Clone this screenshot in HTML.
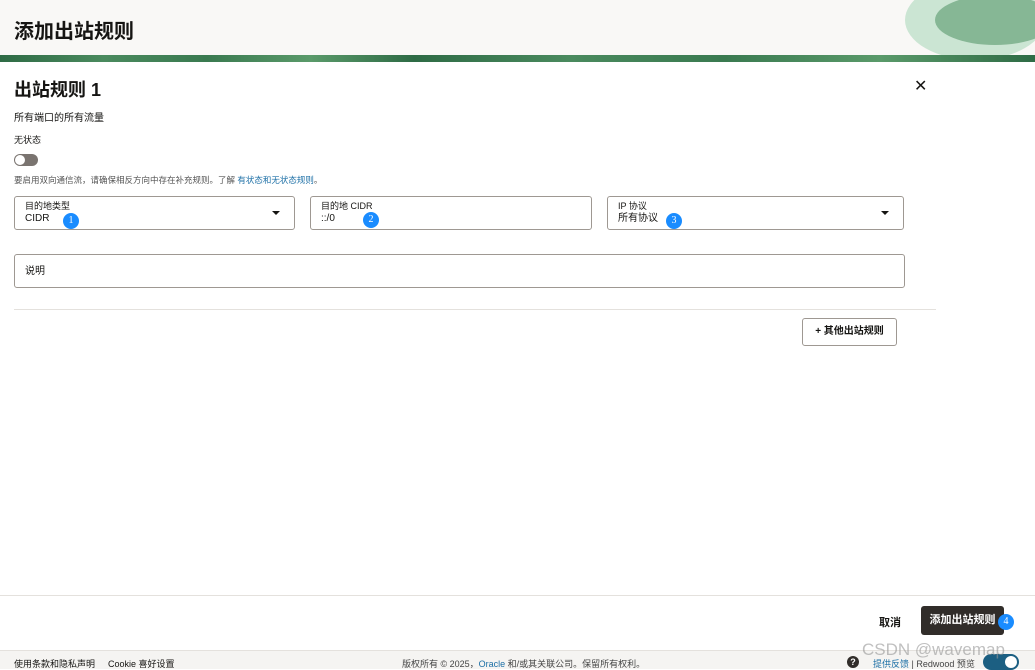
<!DOCTYPE html>
<html><head><meta charset="utf-8"><style>
*{box-sizing:border-box;margin:0;padding:0}
body{width:1035px;height:669px;overflow:hidden;background:#fff;font-family:"Liberation Sans","Noto Sans CJK SC",sans-serif;color:#161513;position:relative}
.hdr{position:absolute;left:0;top:0;width:1035px;height:55px;background:#f9f8f6}
.band{position:absolute;left:0;top:55px;width:1035px;height:7px;background:linear-gradient(90deg,#2e6b45 0,#4a8a5e 10%,#3a7a50 20%,#5a9a6a 30%,#2e6b45 40%,#4a8a5e 55%,#3a7a50 70%,#5a9a6a 85%,#2e6b45 100%)}
.a{position:absolute;white-space:nowrap}
.fld{position:absolute;border:1px solid #9e9892;border-radius:3px;background:#fff}
.lab{position:absolute;font-size:9px;left:10px;top:3px;line-height:12px}
.val{position:absolute;font-size:10px;left:10px;top:15px;line-height:13px}
.car{position:absolute;right:14px;top:14px;width:0;height:0;border-left:4px solid transparent;border-right:4px solid transparent;border-top:4px solid #161513}
.badge{position:absolute;width:16px;height:16px;border-radius:50%;background:#1a8cff;color:#fff;font-size:10px;text-align:center;line-height:16px;font-family:"Liberation Serif",serif}
</style></head><body>
<div class="hdr"></div>
<svg class="a" style="left:880px;top:0" width="155" height="55"><ellipse cx="95" cy="20" rx="70" ry="40" fill="#cbe5d3"/><ellipse cx="115" cy="20" rx="60" ry="25" fill="#86b795"/></svg>
<div class="band"></div>
<div class="a" style="left:14px;top:15px;font-size:20px;font-weight:bold">添加出站规则</div>
<div class="a" style="left:14px;top:76px;font-size:18px;font-weight:bold">出站规则 1</div>
<div class="a" style="left:914px;top:76px;font-size:16px">✕</div>
<div class="a" style="left:14px;top:109px;font-size:10px">所有端口的所有流量</div>
<div class="a" style="left:14px;top:133px;font-size:9px">无状态</div>
<div class="a" style="left:14px;top:154px;width:24px;height:12px;border-radius:6px;background:#7a7470"><div style="position:absolute;left:1px;top:1px;width:10px;height:10px;border-radius:50%;background:#fff"></div></div>
<div class="a" style="left:14px;top:174px;font-size:8.5px;color:#555">要启用双向通信流，请确保相反方向中存在补充规则。了解 <span style="color:#1c6fa6">有状态和无状态规则</span>。</div>
<div class="fld" style="left:14px;top:196px;width:281px;height:34px"><div class="lab">目的地类型</div><div class="val">CIDR</div><div class="car"></div></div>
<div class="badge" style="left:63px;top:213px">1</div>
<div class="fld" style="left:310px;top:196px;width:282px;height:34px"><div class="lab">目的地 CIDR</div><div class="val">::/0</div></div>
<div class="badge" style="left:363px;top:212px">2</div>
<div class="fld" style="left:607px;top:196px;width:297px;height:34px"><div class="lab">IP 协议</div><div class="val">所有协议</div><div class="car"></div></div>
<div class="badge" style="left:666px;top:213px">3</div>
<div class="fld" style="left:14px;top:254px;width:891px;height:34px"><div class="val" style="top:10px">说明</div></div>
<div class="a" style="left:14px;top:309px;width:922px;height:1px;background:#e4e1dd"></div>
<div class="a" style="left:802px;top:318px;width:95px;height:28px;border:1px solid #9e9892;border-radius:3px;font-size:10px;font-weight:bold;text-align:center;line-height:26px">+ 其他出站规则</div>
<div class="a" style="left:0;top:595px;width:1035px;height:1px;background:#e4e1dd"></div>
<div class="a" style="left:879px;top:614px;font-size:11px;font-weight:bold">取消</div>
<div class="a" style="left:921px;top:606px;width:83px;height:29px;background:#312d2a;border-radius:3px;color:#fff;font-size:11px;font-weight:bold;text-align:center;line-height:29px">添加出站规则</div>
<div class="badge" style="left:998px;top:614px">4</div>
<div class="a" style="left:0;top:650px;width:1035px;height:19px;background:#f5f4f2;border-top:1px solid #e4e1dd"></div>
<div class="a" style="left:14px;top:657px;font-size:9px">使用条款和隐私声明</div>
<div class="a" style="left:108px;top:657px;font-size:9px">Cookie 喜好设置</div>
<div class="a" style="left:402px;top:657px;font-size:9px;color:#444">版权所有 © 2025，<span style="color:#1c6fa6">Oracle</span> 和/或其关联公司。保留所有权利。</div>
<div class="a" style="left:847px;top:656px;width:12px;height:12px;border-radius:50%;background:#312d2a;color:#fff;font-size:9px;text-align:center;line-height:12px;font-weight:bold">?</div>
<div class="a" style="left:873px;top:657px;font-size:9px;color:#1c6fa6">提供反馈 <span style="color:#444">| Redwood 预览</span></div>
<div class="a" style="left:983px;top:654px;width:36px;height:16px;border-radius:8px;background:#1c5f82"><div style="position:absolute;right:2px;top:2px;width:12px;height:12px;border-radius:50%;background:#fff"></div></div>
<div class="a" style="left:862px;top:640px;font-size:17px;color:rgba(150,150,150,.6)">CSDN @wavemap</div>
</body></html>
